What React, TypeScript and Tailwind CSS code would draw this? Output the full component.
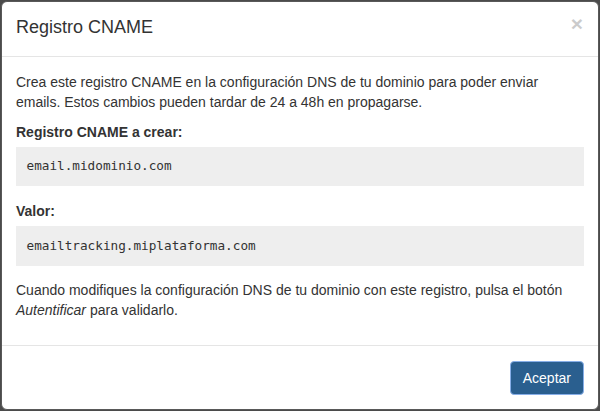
import React from 'react';

const App: React.FC = () => {
  return (
    <div className="w-[600px] h-[411px] overflow-hidden bg-[#4b4b4b] p-px font-['Liberation_Sans',Arial,sans-serif] text-[14px] leading-[20px] text-[#333]">
      <div className="h-[409px] overflow-hidden rounded-[6px] border border-[#595959] bg-white">
        <div className="flex items-start justify-between border-b border-[#e5e5e5] px-[14px] pt-[13px] pb-[15px]">
          <h4 className="text-[18px] leading-[25.7px] font-normal">Registro CNAME</h4>
          <button className="mt-[-2px] mr-px text-[21px] leading-none font-bold text-black opacity-20">×</button>
        </div>

        <div className="px-[14px] pt-[15px] pb-[15px]">
          <p className="mb-[10px]">
            Crea este registro CNAME en la configuración DNS de tu dominio para poder enviar emails. Estos cambios pueden tardar de 24 a 48h en propagarse.
          </p>
          <label className="mb-[5px] block font-bold">Registro CNAME a crear:</label>
          <pre className="bg-[#eee] px-[10.5px] py-[10.5px] font-['DejaVu_Sans_Mono',monospace] text-[12.7px] leading-[18.6px] text-[#333]">email.midominio.com</pre>
          <label className="mt-[15px] mb-[5px] block font-bold">Valor:</label>
          <pre className="bg-[#eee] px-[10.5px] py-[10.5px] font-['DejaVu_Sans_Mono',monospace] text-[12.7px] leading-[18.6px] text-[#333]">emailtracking.miplataforma.com</pre>
          <p className="mt-[14px] mb-[10px]">
            Cuando modifiques la configuración DNS de tu dominio con este registro, pulsa el botón <em>Autentificar</em> para validarlo.
          </p>
        </div>

        <div className="flex justify-end border-t border-[#e5e5e5] px-[14px] pt-[15px] pb-[15px]">
          <button className="h-[34px] rounded-[4px] border border-[#86aee8] bg-[#2a5f8f] px-[12px] text-[14px] leading-[20px] text-white">
            Aceptar
          </button>
        </div>
      </div>
    </div>
  );
};

export default App;
